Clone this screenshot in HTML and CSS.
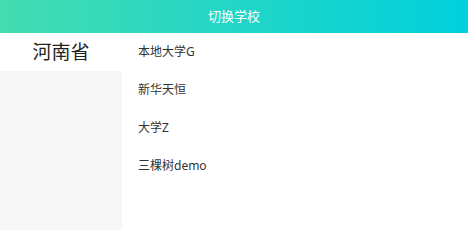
FILE: index.html
```html
<!DOCTYPE html>
<html lang="zh-CN">
<head>
    <meta charset="UTF-8">
    <meta name="viewport" content="width=device-width, initial-scale=1.0">
    <title>切换学校</title>
    <link rel="stylesheet" href="styles.css">
</head>
<body>

<div class="header">切换学校</div>

<div class="main">
    <div class="sidebar">
        <div class="province active">河南省</div>
    </div>
    <div class="school-list">
        <div class="school">本地大学G</div>
        <div class="school">新华天恒</div>
        <div class="school">大学Z</div>
        <div class="school">三棵树demo</div>
    </div>
</div>

</body>
</html>
```

FILE: styles.css
```css
body {
    font-family: 'Noto Sans', 'Noto Sans CJK SC', sans-serif;
    margin: 0;
    height: 230px;
    display: flex;
    flex-direction: column;
    background-color: #ffffff;
    overflow: hidden;
}
.header {
    height: 33px;
    line-height: 33px;
    flex-shrink: 0;
    text-align: center;
    color: #ffffff;
    font-size: 13px;
    background: linear-gradient(to right, #44dcb0, #00d0dd);
}
.main {
    flex: 1;
    display: flex;
}
.sidebar {
    width: 122px;
    background-color: #f6f6f6;
}
.province {
    height: 38px;
    line-height: 38px;
    text-align: center;
    font-size: 19px;
    color: #222;
}
.province.active {
    background-color: #ffffff;
}
.school-list {
    flex: 1;
    padding-left: 16px;
}
.school {
    height: 38px;
    line-height: 38px;
    font-size: 12px;
    color: #333;
}
```
